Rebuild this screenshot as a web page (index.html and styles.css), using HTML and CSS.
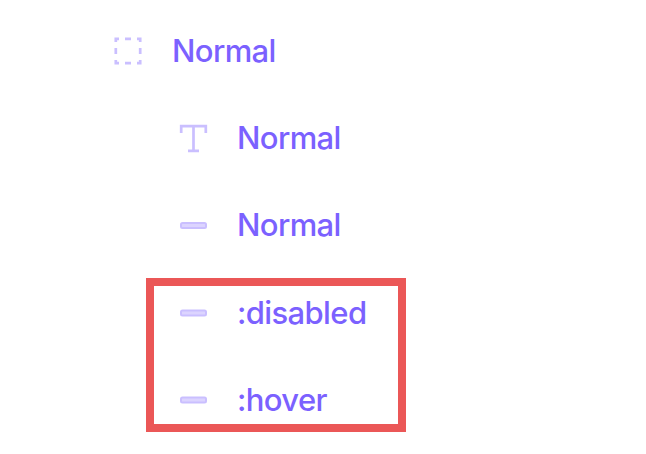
FILE: index.html
```html
<!DOCTYPE html>
<html lang="en">
<head>
<meta charset="utf-8">
<title>Layers</title>
<link rel="stylesheet" href="styles.css">
</head>
<body>
<ul class="layers">
  <li class="layer"><svg class="icon" viewBox="0 0 28 28"><path class="line" d="M1.800 5V1.800H5M11 1.800h6M23 1.800h3.200V5M26.200 11v6M26.200 23v3.200H23M17 26.200h-6M5 26.200H1.800V23M1.800 17v-6"/></svg><span class="label">Normal</span></li>
  <li class="layer child"><svg class="icon" viewBox="0 0 28 28"><path class="line" d="M2.200 9V2.200H26.800V9M14.500 2.200V26.800M9 26.800h11"/></svg><span class="label">Normal</span></li>
  <li class="layer child"><svg class="icon" viewBox="0 0 28 28"><rect class="bar" x="2" y="12" width="25" height="5" rx="1.500"/></svg><span class="label">Normal</span></li>
  <li class="states">
    <ul class="group">
      <li class="layer"><svg class="icon" viewBox="0 0 28 28"><rect class="bar" x="2" y="11.500" width="25" height="5" rx="1.500"/></svg><span class="label">:disabled</span></li>
      <li class="layer"><svg class="icon" viewBox="0 0 28 28"><rect class="bar" x="2" y="11.500" width="25" height="5" rx="1.500"/></svg><span class="label">:hover</span></li>
    </ul>
  </li>
</ul>
</body>
</html>
```
FILE: styles.css
```css
* { box-sizing: border-box; }
body { margin: 0; background: #fff; }
ul { list-style: none; margin: 0; padding: 0; }
.layers { padding: 7px 0 0 114px; }
.layer {
  display: flex;
  align-items: center;
  gap: 30px;
  height: 87.3px;
  color: #7b61ff;
  font: 500 31px/40px Inter, sans-serif;
  letter-spacing: -0.62px;
}
.child { margin-left: 65px; }
.icon { width: 28px; height: 28px; flex: none; overflow: visible; }
.line { fill: none; stroke: #cabfff; stroke-width: 2.7; }
.bar { fill: #dcd4ff; stroke: #cabfff; stroke-width: 2; }
.states {
  width: 260px;
  height: 154px;
  margin: 9px 0 0 32px;
  border: 8px solid #eb5757;
  padding-left: 25px;
}
.group { margin-top: -17px; }
```
